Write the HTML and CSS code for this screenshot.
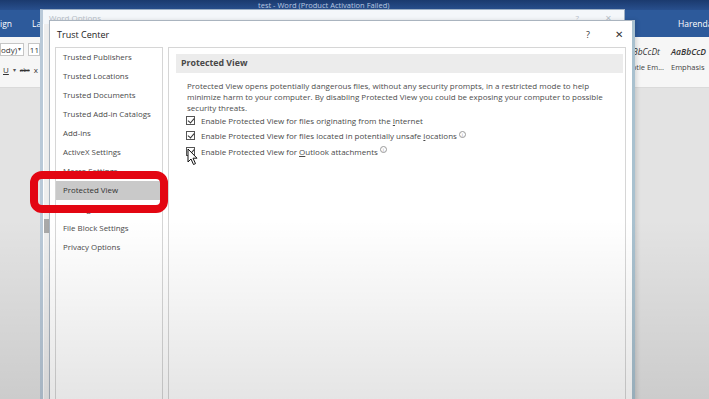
FILE: index.html
```html
<!DOCTYPE html>
<html>
<head>
<meta charset="utf-8">
<link rel="stylesheet" href="styles.css">
</head>
<body>
<div class="word">
  <div class="titlebar"><span class="apptitle">test - Word (Product Activation Failed)</span></div>
  <div class="tabs">
    <span class="tab t1">ign</span>
    <span class="tab t2">La</span>
    <span class="spacer"></span>
    <span class="user">Harenda</span>
  </div>
  <div class="ribbon">
    <div class="rib-left">
      <div class="fontrow"><span class="fontbox">ody)<span class="dd">▾</span></span><span class="size">11</span></div>
      <div class="fmtrow"><span class="u">U</span><span class="dd">▾</span><span class="abc">abc</span><span class="xx">x</span></div>
    </div>
    <div class="styles">
      <div class="style"><span class="sample">AaBbCcDt</span><span class="sname">Subtle Em...</span></div>
      <div class="style"><span class="sample em">AaBbCcD</span><span class="sname">Emphasis</span></div>
    </div>
  </div>
  <div class="doc"></div>
</div>

<div class="options">
  <div class="opt-title">
    <span class="opt-name">Word Options</span>
    <span class="spacer"></span>
    <span class="opt-q">?</span>
    <span class="opt-x">✕</span>
  </div>
  <div class="opt-body">
    <div class="opt-scroll"><div class="thumb"></div></div>
  </div>
</div>

<div class="trust">
  <div class="trust-title">
    <span class="tname">Trust Center</span>
    <span class="spacer"></span>
    <span class="tq">?</span>
    <span class="tx">✕</span>
  </div>
  <div class="trust-body">
    <div class="side">
      <div class="item">Trusted Publishers</div>
      <div class="item">Trusted Locations</div>
      <div class="item">Trusted Documents</div>
      <div class="item">Trusted Add-in Catalogs</div>
      <div class="item">Add-ins</div>
      <div class="item">ActiveX Settings</div>
      <div class="item">Macro Settings</div>
      <div class="item sel">Protected View</div>
      <div class="item">Message Bar</div>
      <div class="item">File Block Settings</div>
      <div class="item">Privacy Options</div>
    </div>
    <div class="main">
      <div class="head">Protected View</div>
      <p class="desc">Protected View opens potentially dangerous files, without any security prompts, in a restricted mode to help<br>minimize harm to your computer. By disabling Protected View you could be exposing your computer to possible<br>security threats.</p>
      <div class="opts">
        <div class="row"><span class="cb"></span><span>Enable Protected View for files originating from the <u>I</u>nternet</span></div>
        <div class="row"><span class="cb"></span><span>Enable Protected View for files located in potentially unsafe <u>l</u>ocations</span><span class="info">i</span></div>
        <div class="row"><span class="cb"></span><span>Enable Protected View for <u>O</u>utlook attachments</span><span class="info">i</span></div>
      </div>
    </div>
  </div>
</div>

<div class="redbox"></div>
<svg class="cursor" width="12" height="18" viewBox="0 0 12 18"><path d="M1 1 L1 14 L4 11 L6.5 16.5 L8.5 15.6 L6 10.2 L10 10.2 Z" fill="#fff" stroke="#111" stroke-width="1"/></svg>
<div class="vignette"></div>
</body>
</html>
```
FILE: styles.css
```css
* { box-sizing: border-box; }
html, body { margin: 0; padding: 0; }
body {
  width: 709px;
  height: 399px;
  overflow: hidden;
  position: relative;
  font-family: "Open Sans", "Noto Sans", sans-serif;
  background: #e1e1e1;
}
.spacer { flex: 1; }

/* Word window behind */
.word { display: flex; flex-direction: column; height: 399px; }
.titlebar {
  height: 10px;
  background: linear-gradient(#1b3a6e, #284f8d);
  padding-left: 258px;
  font-size: 7.5px;
  line-height: 10px;
  color: #b8c7e0;
}
.tabs {
  height: 27px;
  background: #2d5a9b;
  display: flex;
  align-items: center;
  color: #fff;
  font-size: 8.5px;
  position: relative;
  overflow: hidden;
}
.tab.t1 { margin-left: 0; }
.tab.t2 { margin-left: 20px; }
.user { width: 31px; white-space: nowrap; overflow: hidden; }
.ribbon {
  height: 51px;
  background: #f6f6f6;
  display: flex;
  overflow: hidden;
  border-bottom: 1px solid #dadada;
}
.rib-left { width: 40px; display: flex; flex-direction: column; font-size: 8px; color: #333; }
.fontrow { display: flex; align-items: center; margin-top: 6px; height: 13px; gap: 4px; }
.fontbox { border: 1px solid #c6c6c6; background: #fff; width: 30px; height: 13px; line-height: 11px; display: flex; justify-content: space-between; padding-right: 2px; }
.dd { font-size: 6px; color: #555; }
.size { border: 1px solid #c6c6c6; background: #fff; padding-left: 1px; height: 13px; line-height: 11px; }
.fmtrow { display: flex; align-items: center; gap: 4px; margin-top: 8px; padding-left: 3px; }
.u { text-decoration: underline; }
.abc { font-size: 6px; text-decoration: line-through; }
.styles { flex: 1; display: flex; justify-content: flex-end; margin-right: -10px; }
.style { width: 48px; display: flex; flex-direction: column; padding-top: 9px; }
.sample { font-size: 8.5px; font-style: italic; color: #333; white-space: nowrap; }
.sample.em { font-weight: 600; }
.sname { font-size: 7.5px; color: #444; margin-top: 5px; white-space: nowrap; }
.doc { flex: 1; background: #e3e3e3; }

/* Word Options window */
.options {
  position: absolute;
  left: 40px;
  top: 9px;
  width: 585px;
  height: 400px;
  background: #fff;
  border: 1px solid #9eb0c4;
  border-left: 3px solid #b9c9d8;
  display: flex;
  flex-direction: column;
}
.opt-title {
  height: 14px;
  display: flex;
  align-items: center;
  padding: 0 8px 0 6px;
  font-size: 8px;
  color: #b8c0c8;
  background: #f4f7fa;
}
.opt-q { margin-right: 26px; }
.opt-x { margin-right: 4px; }
.opt-body { flex: 1; display: flex; }
.opt-scroll { width: 5px; margin-left: 1px; background: #eeeeee; position: relative; }
.thumb { position: absolute; top: 195px; left: 0; width: 5px; height: 14px; background: #a9a9a9; }

/* Trust center dialog */
.trust {
  position: absolute;
  left: 49px;
  top: 20px;
  width: 586px;
  height: 392px;
  background: #fff;
  border: 1px solid #aab4bf;
  border-right: 3px solid #a9c1cf;
  box-shadow: 2px 0 4px rgba(0,0,0,0.12);
  display: flex;
  flex-direction: column;
}
.trust-title {
  height: 26px;
  display: flex;
  align-items: center;
  padding: 0 9px 0 7px;
  font-size: 9px;
  color: #222;
}
.tq { font-size: 9px; color: #333; margin-right: 25px; }
.tx { font-size: 10px; color: #333; }
.trust-body { flex: 1; display: flex; gap: 5px; padding: 0 6px 0 5px; }
.side {
  width: 108px;
  border: 1px solid #d6d6d6;
}
.item {
  height: 19px;
  line-height: 19px;
  padding-left: 7px;
  font-size: 7.9px;
  color: #4a4a4a;
  white-space: nowrap;
}
.item.sel { background: #c9c9c9; color: #333; }
.main {
  flex: 1;
  border: 1px solid #d6d6d6;
  padding: 6px 2px 0 7px;
}
.head {
  height: 19px;
  line-height: 19px;
  background: #ececec;
  padding-left: 5px;
  font-size: 8.8px;
  font-weight: 700;
  color: #484848;
}
.desc {
  margin: 7px 0 0 11px;
  font-size: 8px;
  line-height: 11px;
  color: #4d4d4d;
  white-space: nowrap;
}
.opts { margin-left: 10px; }
.row {
  height: 15.3px;
  display: flex;
  align-items: center;
  font-size: 8px;
  color: #4a4a4a;
  white-space: nowrap;
}
.cb {
  width: 9px;
  height: 9px;
  border: 1px solid #555;
  margin-right: 6px;
  position: relative;
  flex: none;
}
.cb::after {
  content: "";
  position: absolute;
  left: 2px;
  top: 0px;
  width: 3px;
  height: 5px;
  border-right: 1.2px solid #333;
  border-bottom: 1.2px solid #333;
  transform: rotate(40deg);
}
.info {
  width: 7px;
  height: 7px;
  border: 0.8px solid #999;
  border-radius: 50%;
  font-size: 5px;
  line-height: 6px;
  text-align: center;
  color: #999;
  margin-left: 2px;
  margin-top: -3px;
}

/* overlays */
.redbox {
  position: absolute;
  left: 30px;
  top: 171px;
  width: 138px;
  height: 42px;
  border: 8px solid #e30612;
  border-radius: 12px;
  filter: blur(0.7px);
}
.cursor { position: absolute; left: 187px; top: 148px; }
.vignette {
  position: absolute;
  inset: 0;
  pointer-events: none;
  background: linear-gradient(rgba(0,0,0,0) 55%, rgba(0,0,0,0.1) 100%);
}
```
